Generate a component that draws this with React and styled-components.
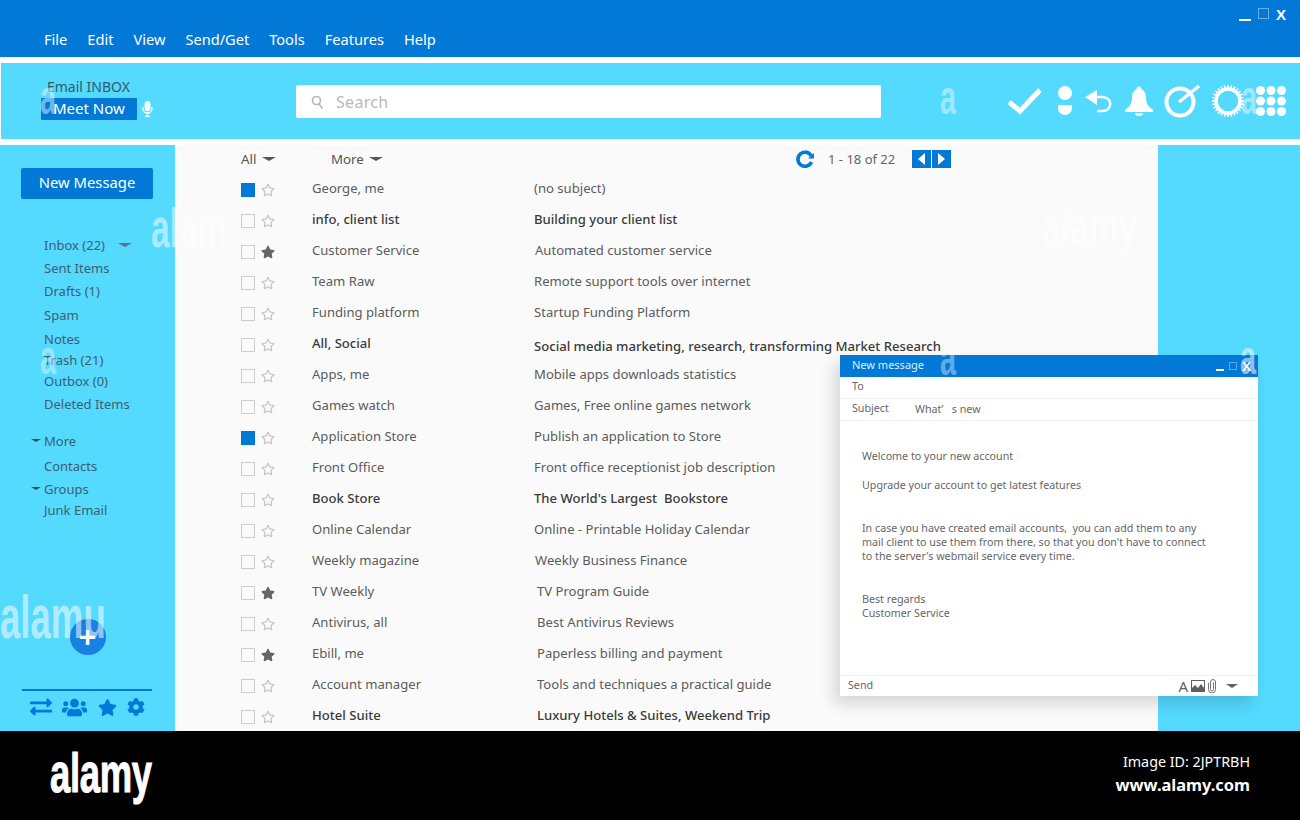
import React from 'react';
import styled, { createGlobalStyle } from 'styled-components';
import { FaExchangeAlt, FaUsers, FaStar, FaRegStar, FaCog } from 'react-icons/fa';

const BLUE = '#0278d7';
const CYAN = '#54d9ff';
const FONT = '"Noto Sans", "Open Sans", sans-serif';

const GlobalStyle = createGlobalStyle`
  html, body { margin: 0; padding: 0; background: #fff; }
  body { font-family: ${FONT}; }
`;

const Page = styled.div`
  position: relative;
  width: 1300px;
  height: 820px;
  overflow: hidden;
  background: #fff;
  display: flex;
  flex-direction: column;
  color: #555;
`;

// TOP BAR
const TopBar = styled.div`
  height: 57px;
  background: ${BLUE};
  color: #fff;
  display: flex;
  flex-direction: column;
  justify-content: space-between;
`;

const WinControls = styled.div`
  display: flex;
  justify-content: flex-end;
  align-items: center;
  gap: 7px;
  height: 34px;
  padding-right: 14px;
  box-sizing: border-box;
`;

const WinMin = styled.span`
  width: 12px;
  height: 2px;
  background: #fff;
  margin-top: 10px;
`;

const WinMax = styled.span`
  width: 9px;
  height: 9px;
  border: 1px solid rgba(255, 255, 255, 0.4);
  margin-top: -3px;
`;

const WinClose = styled.span`
  font: bold 15px "Liberation Sans", sans-serif;
`;

const Menu = styled.nav`
  display: flex;
  padding: 0 0 8px 44px;
  font-size: 14.6px;
  line-height: 20px;
  gap: 20px;
`;

// HEADER
const Header = styled.header`
  height: 76px;
  margin: 6px 0 6px 1px;
  background: ${CYAN};
  display: flex;
  align-items: center;
`;

const Brand = styled.div`
  width: 295px;
  box-sizing: border-box;
  padding-left: 40px;
  margin-top: -3px;
`;

const BrandTitle = styled.div`
  padding-left: 6px;
  font-size: 14px;
  line-height: 16px;
  color: #38586a;
`;

const MeetRow = styled.div`
  display: flex;
  align-items: center;
  gap: 5px;
  margin-top: 3px;
`;

const MeetNow = styled.div`
  width: 96px;
  height: 22px;
  box-sizing: border-box;
  padding-left: 12px;
  background: ${BLUE};
  border-radius: 1px;
  color: #fff;
  font-size: 15px;
  line-height: 21px;
`;

const SearchBox = styled.div`
  width: 585px;
  height: 33px;
  background: #fff;
  border-radius: 2px;
  display: flex;
  align-items: center;
  gap: 12px;
  padding: 2px 0 0 15px;
  box-sizing: border-box;
  color: #b9b9b9;
  font-size: 16px;
  letter-spacing: 0.3px;
`;

const Tools = styled.div`
  margin-left: 126px;
  display: flex;
  align-items: center;
`;

const ToolIcon = styled.svg`
  display: block;
  flex: none;
  margin-left: ${p => p.$left || 0}px;
`;

// MAIN
const Main = styled.main`
  flex: 1;
  display: flex;
  min-height: 0;
`;

const Sidebar = styled.aside`
  width: 175px;
  flex: none;
  background: ${CYAN};
  display: flex;
  flex-direction: column;
  padding-top: 23px;
  box-sizing: border-box;
`;

const NewButton = styled.div`
  width: 132px;
  height: 31px;
  margin-left: 21px;
  background: ${BLUE};
  border-radius: 2px;
  color: #fff;
  font-size: 14.8px;
  line-height: 28px;
  text-align: center;
`;

const NavItem = styled.div`
  position: relative;
  margin-top: ${p => p.$top}px;
  padding-left: 44px;
  font-size: 13px;
  line-height: 20px;
  color: #3d5f70;
  display: flex;
  align-items: center;
`;

const Caret = styled.span`
  display: inline-block;
  width: 0;
  height: 0;
  border-left: ${p => p.$size || 7}px solid transparent;
  border-right: ${p => p.$size || 7}px solid transparent;
  border-top: ${p => Math.round((p.$size || 7) * 0.6)}px solid ${p => p.$color || '#555'};
  margin-left: ${p => p.$left || 0}px;
`;

const SideCaret = styled(Caret)`
  position: absolute;
  left: 31px;
  top: 8px;
`;

const Fab = styled.div`
  width: 36px;
  height: 36px;
  border-radius: 50%;
  background: #1880e0;
  align-self: center;
  margin-top: auto;
  margin-bottom: 34px;
  display: flex;
  align-items: center;
  justify-content: center;
  color: #fff;
  font: bold 30px/36px "Liberation Sans", sans-serif;
`;

const SideFooter = styled.div`
  margin: 0 23px 12px 22px;
  border-top: 2px solid ${BLUE};
  padding: 4px 7px 0 8px;
  height: 24px;
  display: flex;
  align-items: center;
  justify-content: space-between;
  color: ${BLUE};
`;

const List = styled.section`
  flex: 1;
  background: #fafafa;
  overflow: hidden;
  min-width: 0;
`;

const ListHead = styled.div`
  height: 29px;
  box-sizing: border-box;
  padding: 0 0 2px 66px;
  display: flex;
  align-items: center;
  font-size: 13.3px;
`;

const HeadCell = styled.div`
  width: ${p => p.$width}px;
  display: flex;
  align-items: center;
`;

const Pager = styled.div`
  margin-left: 323px;
  display: flex;
  align-items: center;
`;

const PagerText = styled.span`
  margin: 0 17px 0 14px;
  color: #666;
  font-size: 13px;
`;

const PageBtn = styled.span`
  width: 19px;
  height: 18px;
  background: ${BLUE};
  margin-right: 1px;
  display: flex;
  align-items: center;
  justify-content: center;
`;

const Row = styled.div`
  height: 31px;
  display: flex;
  align-items: center;
  padding-left: 66px;
  font-size: 13.1px;
  color: ${p => (p.$bold ? '#3b3b3b' : '#5c5c5c')};
  font-weight: ${p => (p.$bold ? 500 : 400)};
`;

const Check = styled.span`
  width: 14px;
  height: 14px;
  flex: none;
  box-sizing: border-box;
  border: 1px solid ${p => (p.$on ? BLUE : '#cdcdcd')};
  background: ${p => (p.$on ? BLUE : 'transparent')};
`;

const StarCell = styled.span`
  width: 14px;
  flex: none;
  margin-left: 6px;
  display: flex;
  color: ${p => (p.$on ? '#666' : '#c4c4c4')};
`;

const Sender = styled.span`
  width: 222px;
  flex: none;
  margin-left: 37px;
  padding-bottom: 3px;
`;

const Subject = styled.span`
  margin-left: ${p => p.$shift || 0}px;
  padding-top: ${p => p.$down || 0}px;
  padding-bottom: 3px;
  white-space: pre;
`;

const RightGutter = styled.div`
  width: 142px;
  flex: none;
  background: ${CYAN};
`;

// COMPOSE WINDOW
const Compose = styled.div`
  position: absolute;
  left: 840px;
  top: 355px;
  width: 418px;
  height: 341px;
  background: #fff;
  box-shadow: -6px 8px 14px rgba(0, 0, 0, 0.14);
  display: flex;
  flex-direction: column;
  font-size: 10.7px;
  color: #666;
`;

const ComposeTitle = styled.div`
  height: 22px;
  box-sizing: border-box;
  background: ${BLUE};
  color: #dff1ff;
  display: flex;
  align-items: center;
  padding: 0 7px 3px 12px;
  font-size: 11px;
`;

const ComposeControls = styled.div`
  margin-left: auto;
  padding-top: 3px;
  display: flex;
  align-items: center;
  gap: 5px;
`;

const MiniMin = styled.span`
  width: 8px;
  height: 2px;
  background: #fff;
  margin-top: 7px;
`;

const MiniMax = styled.span`
  width: 6px;
  height: 6px;
  border: 1px solid rgba(255, 255, 255, 0.35);
`;

const MiniClose = styled.span`
  color: #fff;
  font: bold 13px "Liberation Sans", sans-serif;
`;

const Field = styled.div`
  height: 22px;
  display: flex;
  align-items: center;
  padding: 0 0 3px 12px;
  border-bottom: 1px solid #f1f1f1;
  box-sizing: border-box;
`;

const FieldName = styled.span`
  width: 63px;
`;

const FieldValue = styled.span`
  white-space: pre;
  padding-top: 2px;
`;

const ComposeBody = styled.div`
  flex: 1;
  padding: 28px 44px 0 22px;
  line-height: 14px;
`;

const Para = styled.p`
  margin: 0 0 ${p => p.$after}px;
`;

const ComposeFoot = styled.div`
  height: 21px;
  display: flex;
  align-items: center;
  padding: 0 20px 3px 8px;
  border-top: 1px solid #f1f1f1;
  box-sizing: border-box;
  color: #666;
`;

const FootTools = styled.div`
  margin-left: auto;
  display: flex;
  align-items: center;
  gap: 3px;
  padding-top: 3px;
  color: #5f5f5f;
`;

const FootA = styled.span`
  font-size: 15px;
  line-height: 15px;
`;

// BOTTOM STRIP
const Strip = styled.footer`
  height: 89px;
  flex: none;
  background: #000;
  color: #fff;
  display: flex;
  align-items: center;
  justify-content: space-between;
  padding: 0 50px;
`;

const Logo = styled.div`
  font: bold 56px/60px "Liberation Sans", sans-serif;
  -webkit-text-stroke: 1px #fff;
  letter-spacing: -0.5px;
  transform: scaleX(0.65);
  transform-origin: left center;
  margin-top: -6px;
`;

const Credit = styled.div`
  text-align: right;
  font-size: 14.3px;
  line-height: 23px;
  margin-top: -5px;
`;

const CreditUrl = styled.div`
  font-size: 16.4px;
  font-weight: 700;
`;

// stock photo marks that lie over the whole page
const Mark = styled.span`
  position: absolute;
  left: ${p => p.$x}px;
  top: ${p => p.$y}px;
  font: bold ${p => p.$size}px/1.2 "Liberation Sans", sans-serif;
  color: rgba(255, 255, 255, ${p => p.$alpha});
  transform: scaleX(${p => p.$scale || 0.6});
  transform-origin: left top;
  pointer-events: none;
`;

const menu = ['File', 'Edit', 'View', 'Send/Get', 'Tools', 'Features', 'Help'];

const nav = [
  { label: 'Inbox (22)', top: 36, caret: true },
  { label: 'Sent Items', top: 3 },
  { label: 'Drafts (1)', top: 3 },
  { label: 'Spam', top: 4 },
  { label: 'Notes', top: 4 },
  { label: 'Trash (21)', top: 1 },
  { label: 'Outbox (0)', top: 1 },
  { label: 'Deleted Items', top: 3 },
  { label: 'More', top: 17, side: true },
  { label: 'Contacts', top: 5 },
  { label: 'Groups', top: 3, side: true },
  { label: 'Junk Email', top: 1 },
];

const rows = [
  { from: 'George, me', subject: '(no subject)', on: true },
  { from: 'info, client list', subject: 'Building your client list', bold: true },
  { from: 'Customer Service', subject: 'Automated customer service', star: true, shift: 1 },
  { from: 'Team Raw', subject: 'Remote support tools over internet' },
  { from: 'Funding platform', subject: 'Startup Funding Platform' },
  { from: 'All, Social', subject: 'Social media marketing, research, transforming Market Research', bold: true, down: 6 },
  { from: 'Apps, me', subject: 'Mobile apps downloads statistics' },
  { from: 'Games watch', subject: 'Games, Free online games network' },
  { from: 'Application Store', subject: 'Publish an application to Store', on: true },
  { from: 'Front Office', subject: 'Front office receptionist job description' },
  { from: 'Book Store', subject: "The World's Largest  Bookstore", bold: true },
  { from: 'Online Calendar', subject: 'Online - Printable Holiday Calendar' },
  { from: 'Weekly magazine', subject: 'Weekly Business Finance', shift: 1 },
  { from: 'TV Weekly', subject: 'TV Program Guide', star: true, shift: 3 },
  { from: 'Antivirus, all', subject: 'Best Antivirus Reviews', shift: 3 },
  { from: 'Ebill, me', subject: 'Paperless billing and payment', star: true, shift: 3 },
  { from: 'Account manager', subject: 'Tools and techniques a practical guide', shift: 3 },
  { from: 'Hotel Suite', subject: 'Luxury Hotels & Suites, Weekend Trip', bold: true, shift: 3 },
];

// with line-height 1.2 the top sits 5px higher per 48px than with 1
const marks = [
  { text: 'a', x: 40, y: 69, size: 48, alpha: 0.45 },
  { text: 'a', x: 940, y: 69, size: 48, alpha: 0.45 },
  { text: 'a', x: 1241, y: 69, size: 48, alpha: 0.45 },
  { text: 'a', x: 40, y: 329, size: 48, alpha: 0.4 },
  { text: 'a', x: 940, y: 330, size: 48, alpha: 0.4 },
  { text: 'a', x: 1240, y: 329, size: 48, alpha: 0.55 },
  { text: 'alam', x: 151, y: 194, size: 56, alpha: 0.5 },
  { text: 'alamy', x: 1042, y: 192, size: 56, alpha: 0.55 },
  { text: 'alamu', x: 0, y: 580, size: 62, alpha: 0.55, scale: 0.59 },
];

const CheckIcon = () => (
  <ToolIcon width="36" height="28" viewBox="0 0 36 28" fill="none" stroke="#fff" strokeWidth="5">
    <path d="M2 15l11 9L33 3" />
  </ToolIcon>
);

const PersonIcon = () => (
  <ToolIcon $left={14} width="16" height="30" viewBox="0 0 16 30" fill="#fff">
    <circle cx="8" cy="7" r="7" />
    <path d="M1 19h14v3a7 7 0 0 1-14 0z" />
  </ToolIcon>
);

const ReplyIcon = () => (
  <ToolIcon $left={11} width="30" height="24" viewBox="0 0 30 24" fill="none" stroke="#fff" strokeWidth="2.5">
    <path d="M13 1v15L1 8z" fill="#fff" stroke="none" />
    <path d="M12 8h6c11 0 11 14 0 14h-5" />
  </ToolIcon>
);

const BellIcon = () => (
  <ToolIcon $left={11} width="28" height="30" viewBox="0 0 28 30" fill="#fff">
    <circle cx="14" cy="3" r="2.5" />
    <path d="M14 3c5 0 7 4 7 9 0 6 3 9 7 12v2H0v-2c4-3 7-6 7-12 0-5 2-9 7-9z" />
    <path d="M10 27h8a4 3 0 0 1-8 0z" />
  </ToolIcon>
);

const TargetIcon = () => (
  <ToolIcon $left={11} width="37" height="34" viewBox="0 0 37 34" fill="none" stroke="#fff">
    <circle cx="16" cy="18" r="13.5" strokeWidth="4" />
    <path d="M15 18L35 2" strokeWidth="3.5" />
  </ToolIcon>
);

const GearIcon = () => {
  const teeth = Array.from({ length: 28 }, (_, i) => (
    <rect key={i} x="15.2" y="0" width="1.6" height="5" transform={`rotate(${(i * 360) / 28} 16 16)`} />
  ));
  return (
    <ToolIcon $left={11} width="32" height="32" viewBox="0 0 32 32" fill="#fff">
      {teeth}
      <circle cx="16" cy="16" r="12" fill="none" stroke="#fff" strokeWidth="3.5" />
    </ToolIcon>
  );
};

const GridIcon = () => (
  <ToolIcon $left={12} width="30" height="30" viewBox="0 0 30 30" fill="#fff">
    {[4.5, 15, 25.5].map(y =>
      [4.5, 15, 25.5].map(x => <circle key={`${x}-${y}`} cx={x} cy={y} r="4.5" />)
    )}
  </ToolIcon>
);

const SearchIcon = () => (
  <svg width="13" height="14" viewBox="0 0 13 14" fill="none" stroke="#b5b5b5" strokeWidth="1.6">
    <circle cx="5.5" cy="5.5" r="4" />
    <path d="M8 9l3.5 4.5" />
  </svg>
);

const MicIcon = () => (
  <svg width="11" height="16" viewBox="0 0 11 16" fill="none" stroke="#fff" strokeWidth="1.3">
    <rect x="3.2" y="0.5" width="4.6" height="9" rx="2.3" fill="#fff" />
    <path d="M1 6v1.5a4.5 4.5 0 0 0 9 0V6M5.5 12v3M3 15.3h5" />
  </svg>
);

const RefreshIcon = () => (
  <svg width="18" height="18" viewBox="0 0 18 18" fill="none" stroke={BLUE} strokeWidth="3.6">
    <path d="M15.2 6A7 7 0 1 0 15.4 12" />
    <path d="M12 8.5h6V3z" fill={BLUE} stroke="none" />
  </svg>
);

const Arrow = ({ left }) => (
  <svg width="7" height="12" viewBox="0 0 7 12" fill="#fff">
    <path d={left ? 'M7 0v12L0 6z' : 'M0 0v12l7-6z'} />
  </svg>
);

const PictureIcon = () => (
  <svg width="14" height="12" viewBox="0 0 14 12" fill="#5f5f5f">
    <path d="M0 0h14v12H0zM1 1v7l3-3 3 3 3-4 3 4V1z" fillRule="evenodd" />
  </svg>
);

const ClipIcon = () => (
  <svg width="8" height="14" viewBox="0 0 8 14" fill="none" stroke="#777" strokeWidth="1">
    <path d="M5.5 3.5v7a1.5 1.5 0 0 1-3 0V3a2.5 2.5 0 0 1 5 0v7.5a3.5 3.5 0 0 1-7 0V4" />
  </svg>
);

export default function App() {
  return (
    <Page>
      <GlobalStyle />
      <TopBar>
        <WinControls>
          <WinMin />
          <WinMax />
          <WinClose>X</WinClose>
        </WinControls>
        <Menu>
          {menu.map(item => <span key={item}>{item}</span>)}
        </Menu>
      </TopBar>

      <Header>
        <Brand>
          <BrandTitle>Email INBOX</BrandTitle>
          <MeetRow>
            <MeetNow>Meet Now</MeetNow>
            <MicIcon />
          </MeetRow>
        </Brand>
        <SearchBox>
          <SearchIcon />
          <span>Search</span>
        </SearchBox>
        <Tools>
          <CheckIcon />
          <PersonIcon />
          <ReplyIcon />
          <BellIcon />
          <TargetIcon />
          <GearIcon />
          <GridIcon />
        </Tools>
      </Header>

      <Main>
        <Sidebar>
          <NewButton>New Message</NewButton>
          {nav.map(item => (
            <NavItem key={item.label} $top={item.top}>
              {item.side && <SideCaret $size={5} $color="#33505f" />}
              {item.label}
              {item.caret && <Caret $left={13} $color="#5a7480" />}
            </NavItem>
          ))}
          <Fab>+</Fab>
          <SideFooter>
            <FaExchangeAlt size={22} />
            <FaUsers size={25} />
            <FaStar size={19} />
            <FaCog size={18} />
          </SideFooter>
        </Sidebar>

        <List>
          <ListHead>
            <HeadCell $width={90}>
              All<Caret $left={6} />
            </HeadCell>
            <HeadCell $width={142}>
              More<Caret $left={5} />
            </HeadCell>
            <Pager>
              <RefreshIcon />
              <PagerText>1 - 18 of 22</PagerText>
              <PageBtn><Arrow left /></PageBtn>
              <PageBtn><Arrow /></PageBtn>
            </Pager>
          </ListHead>
          {rows.map(row => (
            <Row key={row.from} $bold={row.bold}>
              <Check $on={row.on} />
              <StarCell $on={row.star}>
                {row.star ? <FaStar size={14} /> : <FaRegStar size={14} />}
              </StarCell>
              <Sender>{row.from}</Sender>
              <Subject $shift={row.shift} $down={row.down}>{row.subject}</Subject>
            </Row>
          ))}
        </List>

        <RightGutter />
      </Main>

      <Strip>
        <Logo>alamy</Logo>
        <Credit>
          <div>Image ID: 2JPTRBH</div>
          <CreditUrl>www.alamy.com</CreditUrl>
        </Credit>
      </Strip>

      <Compose>
        <ComposeTitle>
          New message
          <ComposeControls>
            <MiniMin />
            <MiniMax />
            <MiniClose>X</MiniClose>
          </ComposeControls>
        </ComposeTitle>
        <Field><FieldName>To</FieldName></Field>
        <Field>
          <FieldName>Subject</FieldName>
          <FieldValue>What’   s new</FieldValue>
        </Field>
        <ComposeBody>
          <Para $after={15}>Welcome to your new account</Para>
          <Para $after={29}>Upgrade your account to get latest features</Para>
          <Para $after={29}>
            In case you have created email accounts,&nbsp; you can add them to any<br />
            mail client to use them from there, so that you don't have to connect<br />
            to the server's webmail service every time.
          </Para>
          <Para $after={0}>Best regards</Para>
          <Para $after={0}>Customer Service</Para>
        </ComposeBody>
        <ComposeFoot>
          Send
          <FootTools>
            <FootA>A</FootA>
            <PictureIcon />
            <ClipIcon />
            <Caret $size={6} $left={7} $color="#5f5f5f" />
          </FootTools>
        </ComposeFoot>
      </Compose>

      {marks.map(m => (
        <Mark key={`${m.x}-${m.y}`} $x={m.x} $y={m.y} $size={m.size} $alpha={m.alpha} $scale={m.scale}>{m.text}</Mark>
      ))}
    </Page>
  );
}
